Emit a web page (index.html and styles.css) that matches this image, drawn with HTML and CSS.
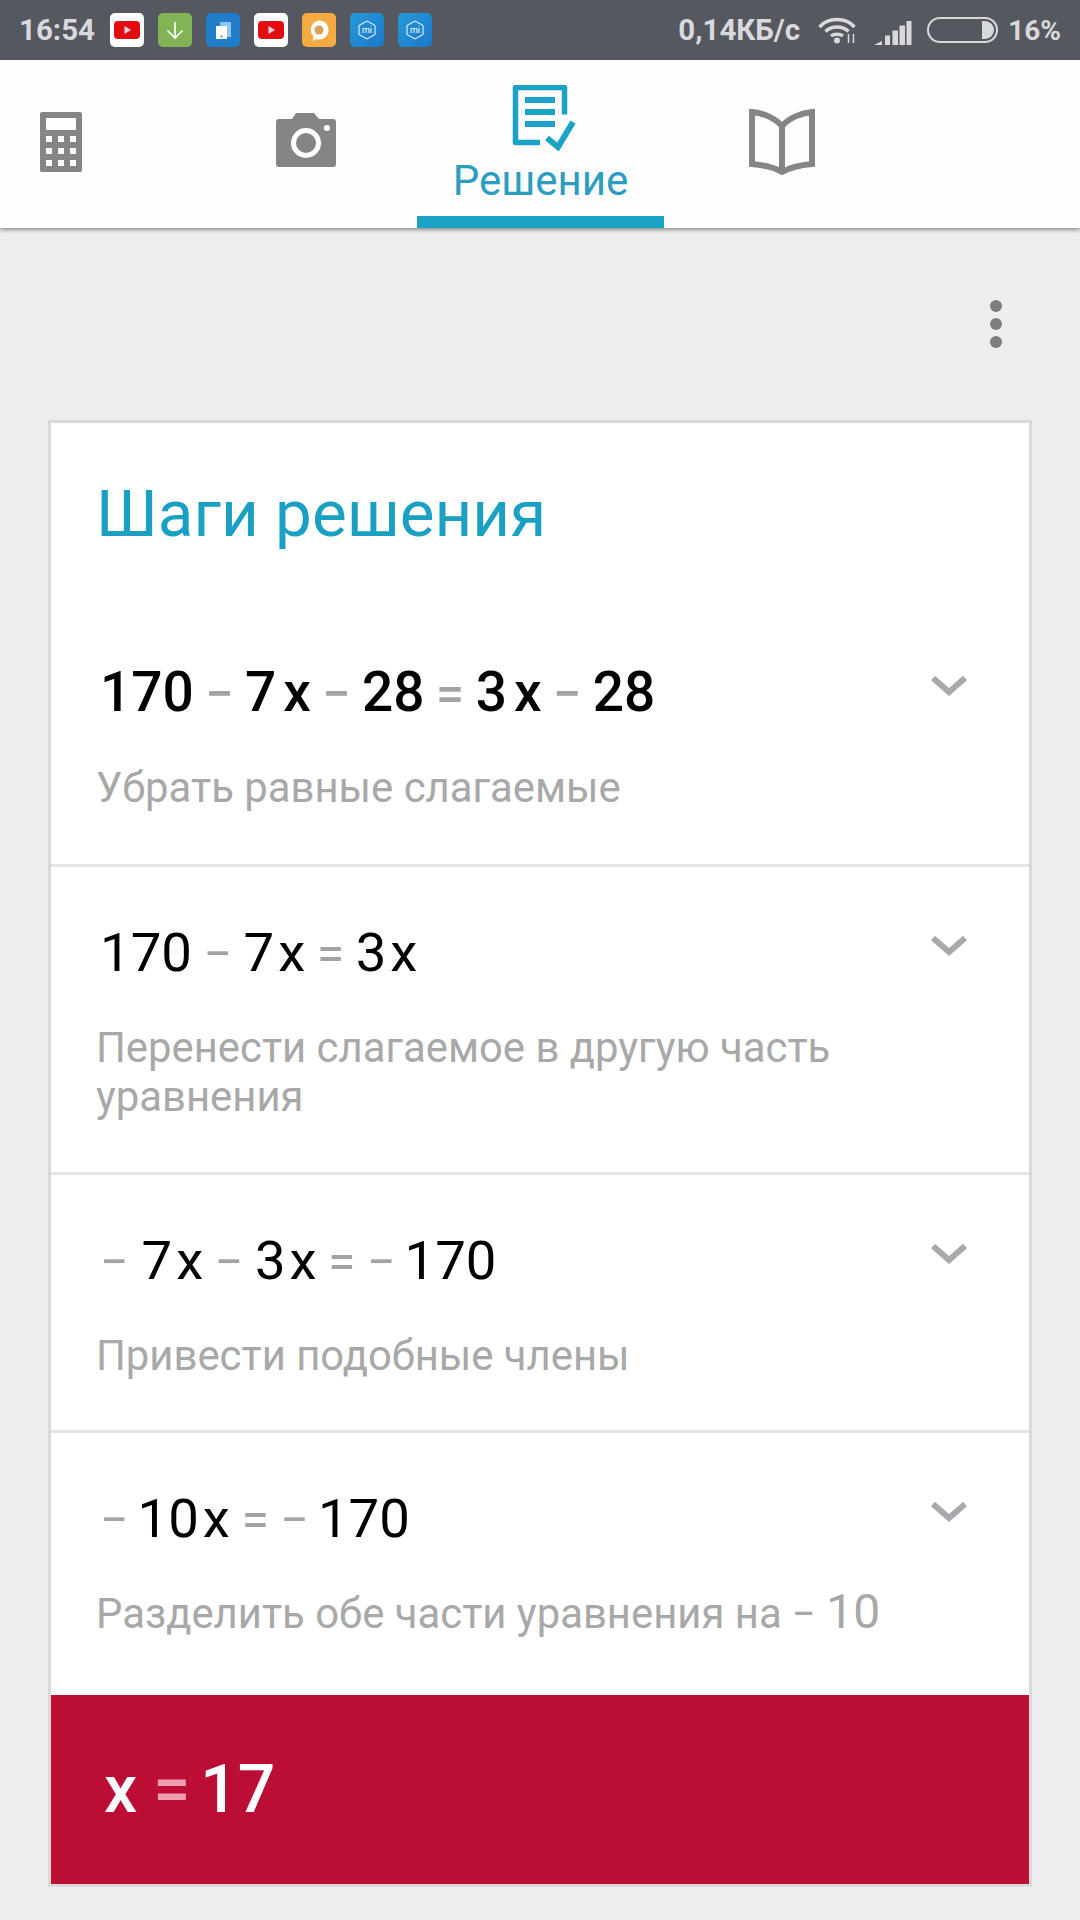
FILE: index.html
```html
<!DOCTYPE html>
<html>
  <head>
    <meta charset="UTF-8" />
    <title>Шаги решения</title>
    <link rel="stylesheet" href="styles.css">
  </head>
  <body>
    <!-- status bar -->
    <div class="status-bar">
      <span class="clock">16:54</span>
      <div class="notify-icons">
        <svg class="notify" viewBox="0 0 34 34"><rect width="34" height="34" rx="5" fill="#fff"/><rect x="4" y="8" width="26" height="18" rx="4" fill="#e30c12"/><path d="M14.500 13l6.500 4-6.500 4z" fill="#f6d5d5"/></svg>
        <svg class="notify" viewBox="0 0 34 34"><rect width="34" height="34" rx="5" fill="#82b455"/><path d="M17 9v16M9.500 17.500l7.500 7.500 7.500-7.500" fill="none" stroke="#fff" stroke-width="1.600"/></svg>
        <svg class="notify" viewBox="0 0 34 34"><rect width="34" height="34" rx="5" fill="#1f7dc9"/><rect x="14" y="9" width="11" height="15" fill="#8fc4ee"/><rect x="10" y="13" width="11" height="13" fill="#fff"/><circle cx="15.500" cy="23.500" r="1" fill="#1f7dc9"/></svg>
        <svg class="notify" viewBox="0 0 34 34"><rect width="34" height="34" rx="5" fill="#fff"/><rect x="4" y="8" width="26" height="18" rx="4" fill="#e30c12"/><path d="M14.500 13l6.500 4-6.500 4z" fill="#f6d5d5"/></svg>
        <svg class="notify" viewBox="0 0 34 34"><rect width="34" height="34" rx="5" fill="#f6aa42"/><path d="M17 7.500a9.500 9.500 0 1 1-3 18.500l-3 2.500 .5-5A9.500 9.500 0 0 1 17 7.500z" fill="#fff"/><circle cx="17" cy="17" r="4.500" fill="#d9a05a"/></svg>
        <svg class="notify" viewBox="0 0 34 34">
          <defs><linearGradient id="miBlue" x1="0" y1="0" x2="1" y2="1"><stop offset="0" stop-color="#2699da"/><stop offset="1" stop-color="#1b78c8"/></linearGradient></defs>
          <rect width="34" height="34" rx="5" fill="url(#miBlue)"/><path d="M17 8l8 4.500v9L17 26l-8-4.500v-9z" fill="none" stroke="#fff" stroke-width="1"/><text class="mi-text" x="17" y="20">mi</text>
        </svg>
        <svg class="notify" viewBox="0 0 34 34"><rect width="34" height="34" rx="5" fill="url(#miBlue)"/><path d="M17 8l8 4.500v9L17 26l-8-4.500v-9z" fill="none" stroke="#fff" stroke-width="1"/><text class="mi-text" x="17" y="20">mi</text></svg>
      </div>
      <div class="status-right">
        <span class="speed">0,14КБ/с</span>
        <svg class="wifi" width="38" height="27" viewBox="0 0 38 27">
          <path d="M1.500 10C10 0 28 0 36.500 10M7.500 14.500c6-6 17-6 23 0M13 19c3-2.500 9-2.500 12 0" fill="none" stroke="#d8d9dc" stroke-width="3.500"/>
          <circle cx="19" cy="23.500" r="3" fill="#d8d9dc"/>
          <path d="M30.500 17v9M35.500 17v9" stroke="#d8d9dc" stroke-width="1.500"/>
        </svg>
        <svg class="signal" width="38" height="24" viewBox="0 0 38 24">
          <path d="M0 24l8-4v4zM11 14.500h5V24h-5zM18.500 9.500h5.500V24h-5.500zM25.500 4.500h5.500V24h-5.500zM32.500 0h5V24h-5z" fill="#d8d9dc"/>
        </svg>
        <div class="battery"><div class="battery-level"></div></div>
        <span class="percent">16%</span>
      </div>
    </div>

    <!-- tabs -->
    <div class="nav">
      <div class="tab tab-calc">
        <svg width="42" height="60" viewBox="0 0 42 60">
          <rect width="42" height="60" rx="2" fill="#858585"/>
          <rect x="6" y="6" width="30" height="12" fill="#fff"/>
          <path d="M6 24h6v6H6zM18 24h6v6h-6zM30 24h6v6h-6zM6 36h6v6H6zM18 36h6v6h-6zM30 36h6v6h-6zM6 48h6v6H6zM18 48h6v6h-6zM30 48h6v6h-6z" fill="#fff"/>
        </svg>
      </div>
      <div class="tab tab-camera">
        <svg width="60" height="54" viewBox="0 0 60 54">
          <path d="M3 6h13l4-6h18l5 6h14a3 3 0 0 1 3 3v42a3 3 0 0 1-3 3H3a3 3 0 0 1-3-3V9a3 3 0 0 1 3-3z" fill="#858585"/>
          <circle cx="30" cy="30" r="12.500" fill="none" stroke="#fff" stroke-width="5"/>
          <circle cx="51" cy="15" r="3" fill="#fff"/>
        </svg>
      </div>
      <div class="tab tab-active">
        <svg class="doc-icon" width="64" height="66" viewBox="0 0 64 66">
          <path d="M28 57.500H3.500V2.500h49v27" fill="none" stroke="#1ba3c6" stroke-width="5.500" stroke-linejoin="round"/>
          <path d="M13 12h30v6H13zM13 24h30v6H13zM13 36h30v6H13z" fill="#1ba3c6"/>
          <path d="M35 53l11 9 15-25" fill="none" stroke="#1ba3c6" stroke-width="6"/>
        </svg>
        <span class="tab-label">Решение</span>
      </div>
      <div class="tab tab-book">
        <svg width="66" height="66" viewBox="0 0 66 66">
          <path d="M33 17C26 9 14 4 3 3v52c11 1 23 4 30 8 7-4 19-7 30-8V3C52 4 40 9 33 17zM33 17v46" fill="none" stroke="#858585" stroke-width="6"/>
        </svg>
      </div>
    </div>

    <div class="content">
      <div class="menu-row">
        <div class="menu-dots"><i></i><i></i><i></i></div>
      </div>

      <div class="card">
        <h1 class="card-title">Шаги решения</h1>

        <div class="step step-first">
          <div class="step-body">
            <div class="math math-bold"><span>170</span><span class="op">−</span><span>7</span><span class="var">x</span><span class="op">−</span><span>28</span><span class="op">=</span><span>3</span><span class="var">x</span><span class="op">−</span><span>28</span></div>
            <div class="hint">Убрать равные слагаемые</div>
          </div>
          <svg class="chevron" width="36" height="22" viewBox="0 0 36 22"><path d="M2 3l16 14L34 3" fill="none" stroke="#a9a9ad" stroke-width="6"/></svg>
        </div>

        <div class="step step-two">
          <div class="step-body">
            <div class="math"><span>170</span><span class="op">−</span><span>7</span><span class="var">x</span><span class="op">=</span><span>3</span><span class="var">x</span></div>
            <div class="hint">Перенести слагаемое в другую часть уравнения</div>
          </div>
          <svg class="chevron" width="36" height="22" viewBox="0 0 36 22"><path d="M2 3l16 14L34 3" fill="none" stroke="#a9a9ad" stroke-width="6"/></svg>
        </div>

        <div class="step step-three">
          <div class="step-body">
            <div class="math"><span class="op op-lead op-wide">−</span><span>7</span><span class="var">x</span><span class="op">−</span><span>3</span><span class="var">x</span><span class="op">=</span><span class="op op-lead">−</span><span>170</span></div>
            <div class="hint">Привести подобные члены</div>
          </div>
          <svg class="chevron" width="36" height="22" viewBox="0 0 36 22"><path d="M2 3l16 14L34 3" fill="none" stroke="#a9a9ad" stroke-width="6"/></svg>
        </div>

        <div class="step step-four">
          <div class="step-body">
            <div class="math"><span class="op op-lead">−</span><span>10</span><span class="var">x</span><span class="op">=</span><span class="op op-lead">−</span><span>170</span></div>
            <div class="hint">Разделить обе части уравнения на − <span class="hint-num">10</span></div>
          </div>
          <svg class="chevron" width="36" height="22" viewBox="0 0 36 22"><path d="M2 3l16 14L34 3" fill="none" stroke="#a9a9ad" stroke-width="6"/></svg>
        </div>

        <div class="answer">
          <span class="answer-var">x</span><span class="answer-eq">=</span><span>17</span>
        </div>
      </div>
    </div>
  </body>
</html>
```

FILE: styles.css
```css
* {
  box-sizing: border-box;
}

html,
body {
  margin: 0;
  height: 1920px;
  overflow: hidden;
}

body {
  background: #eeeeee;
  font-family: Roboto, "Noto Sans", sans-serif;
}

/* status bar */
.status-bar {
  height: 60px;
  background: #56585f;
  color: #d8d9dc;
  display: flex;
  align-items: center;
  padding: 0 19px;
  font-size: 28px;
  font-weight: 500;
}

.clock {
  width: 91px;
  font-size: 29.500px;
  font-weight: 700;
}

.notify-icons {
  display: flex;
  gap: 14px;
}

.notify {
  width: 34px;
  height: 34px;
  display: block;
}

.mi-text {
  font-size: 9px;
  font-weight: 400;
  fill: #fff;
  text-anchor: middle;
}

.status-right {
  margin-left: auto;
  display: flex;
  align-items: center;
}

.speed {
  margin-right: 18px;
  font-size: 29.500px;
  font-weight: 700;
}

.signal {
  margin-left: 18px;
  margin-top: 6px;
}

.battery {
  width: 71px;
  height: 26px;
  margin-left: 15px;
  border: 2px solid #d8d9dc;
  border-radius: 13px;
  padding: 2px;
  display: flex;
  justify-content: flex-end;
}

.battery-level {
  width: 12px;
  background: #d8d9dc;
  border-radius: 0 9px 9px 0;
}

.percent {
  margin-left: 10px;
  font-weight: 700;
}

/* tabs */
.nav {
  height: 168px;
  background: #fdfdfd;
  display: flex;
  box-shadow: 0 2px 4px rgba(0, 0, 0, 0.4);
  position: relative;
}

.tab {
  display: flex;
  flex-direction: column;
  align-items: center;
  justify-content: center;
}

.tab-calc {
  width: 122px;
  padding-bottom: 4px;
  margin-right: 123px;
}

.tab-camera {
  width: 122px;
  padding-bottom: 8px;
  margin-right: 50px;
}

.tab-active {
  width: 247px;
  height: 168px;
  justify-content: flex-start;
  padding-top: 25px;
  border-bottom: 12px solid #1ba3c6;
}

.doc-icon {
  margin-left: 7px;
}

.tab-label {
  font-size: 42px;
  line-height: 47px;
  color: #2a9dc0;
  margin-top: 6px;
}

.tab-book {
  width: 236px;
  padding-bottom: 4px;
}

/* content */
.content {
  padding: 0 48px;
}

.menu-row {
  height: 192px;
  display: flex;
  justify-content: flex-end;
  padding: 72px 30px 0 0;
}

.menu-dots {
  display: flex;
  flex-direction: column;
  gap: 6px;
}

.menu-dots i {
  display: block;
  width: 12px;
  height: 12px;
  border-radius: 50%;
  background: #7e7e7e;
}

.card {
  height: 1467px;
  background: #fff;
  border: 3px solid #d9d9d9;
  display: flex;
  flex-direction: column;
}

.card-title {
  margin: 0;
  height: 149px;
  padding: 45px 0 0 45px;
  font-size: 65.600px;
  line-height: 92px;
  font-weight: 400;
  color: #1ba0c4;
}

.step {
  display: flex;
  justify-content: space-between;
  align-items: flex-start;
  padding: 0 62px 0 46px;
  border-bottom: 3px solid #e4e4e4;
}

.step-first {
  height: 295px;
  padding-top: 87px;
}

.step-two {
  height: 308px;
  padding-top: 52px;
}

.step-three {
  height: 258px;
  padding-top: 52px;
}

.step-four {
  flex: 1;
  padding-top: 52px;
  border-bottom: none;
}

.step-body {
  width: 800px;
}

.chevron {
  margin-top: 16px;
  flex: none;
}

.math {
  display: flex;
  align-items: baseline;
  font-size: 54.500px;
  line-height: 66px;
  color: #000;
  padding-left: 3px;
}

.math-bold {
  font-size: 55px;
  font-weight: 500;
}

.op {
  font-size: 50px;
  color: #a3a3a3;
  margin: 0 11.500px;
}

.op-lead {
  margin-left: 0;
  margin-right: 9px;
}

.op-wide {
  margin-right: 13px;
}

.var {
  margin-left: 4px;
}

.math-bold .var {
  margin-left: 7px;
}

.hint {
  margin-top: 36px;
  margin-left: -1px;
  font-size: 41.850px;
  line-height: 49px;
  color: #a8a8a8;
}

.hint-num {
  font-size: 48px;
  line-height: 40px;
}

.answer {
  height: 189px;
  background: #bc0d35;
  color: #fff;
  display: flex;
  align-items: center;
  padding-left: 53px;
  font-size: 66px;
  font-weight: 500;
}

.answer-eq {
  color: #f09cb0;
  margin: 0 10px 0 16px;
}
```
